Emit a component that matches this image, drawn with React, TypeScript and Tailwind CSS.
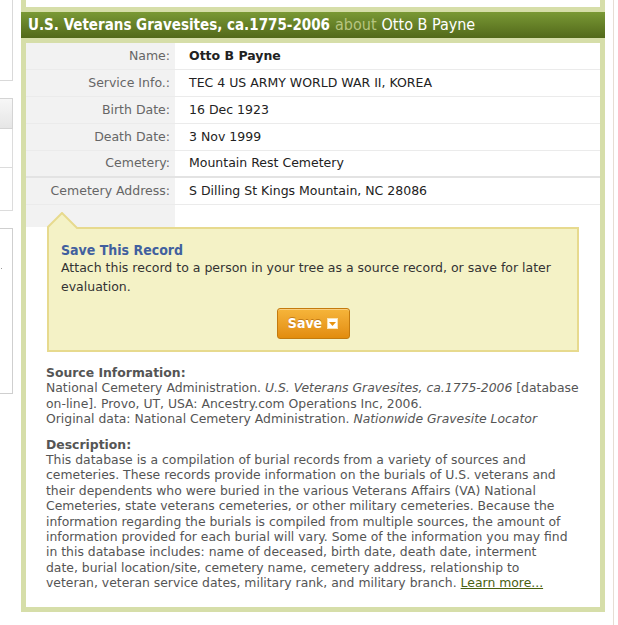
import React from 'react'

const rows = [
  { label: 'Name:', value: 'Otto B Payne', bold: true },
  { label: 'Service Info.:', value: 'TEC 4 US ARMY WORLD WAR II, KOREA' },
  { label: 'Birth Date:', value: '16 Dec 1923' },
  { label: 'Death Date:', value: '3 Nov 1999' },
  { label: 'Cemetery:', value: 'Mountain Rest Cemetery', thick: true },
  { label: 'Cemetery Address:', value: 'S Dilling St Kings Mountain, NC 28086' },
]

function Sidebar() {
  return (
    <div className="w-[13px] shrink-0 flex flex-col">
      <div className="h-[81px] border-r border-b border-[#d9d9d9] bg-white" />
      <div className="h-[17px]" />
      <div className="h-[31px] border-r border-y border-[#d4d4d4] bg-gradient-to-b from-[#f7f7f7] to-[#e6e6e6]" />
      <div className="h-[39px] border-r border-b border-[#dcdcdc] bg-white" />
      <div className="h-[43px] border-r border-b border-[#dcdcdc] bg-white" />
      <div className="h-[17px]" />
      <div className="h-[166px] border-r border-y border-[#cfcfcf] bg-white relative">
        <span className="absolute left-[1px] top-[39px] w-[1px] h-[1px] bg-[#999]" />
      </div>
    </div>
  )
}

function SaveButton() {
  return (
    <button className="h-[31px] w-[73px] rounded-[3px] border border-[#c47a0e] bg-gradient-to-b from-[#f6b53a] to-[#e28c0c] text-white font-bold text-[14px] font-['DejaVu_Sans_Condensed',sans-serif] flex items-center justify-center gap-[5px] shadow-[inset_0_1px_0_rgba(255,255,255,0.35)] [text-shadow:0_-1px_0_rgba(150,80,0,0.5)]">
      <span>Save</span>
      <span className="w-[11px] h-[11px] bg-white flex items-center justify-center border border-[#fbe3b0]">
        <svg width="7" height="4" viewBox="0 0 7 4">
          <path d="M0 0 L7 0 L3.5 4 Z" fill="#e8940f" />
        </svg>
      </span>
    </button>
  )
}

export default function App() {
  return (
    <div className="min-h-[625px] w-[618px] bg-white flex font-['DejaVu_Sans',sans-serif]">
      <Sidebar />

      <div className="ml-[8px] w-[584px] shrink-0">
        {/* bottom of the panel above */}
        <div className="h-[12px] border-x-[5px] border-b-[5px] border-[#d6dea9] bg-white" />

        {/* header bar */}
        <div className="h-[26px] bg-gradient-to-b from-[#7a9935] to-[#52691a] flex items-center px-[7px] whitespace-nowrap text-[15px] font-['DejaVu_Sans_Condensed',sans-serif]">
          <span className="text-white font-bold">U.S. Veterans Gravesites, ca.1775-2006</span>
          <span className="text-[#b7c580] ml-[5px] text-[16px]">about</span>
          <span className="text-white ml-[5px] text-[16px]">Otto B Payne</span>
        </div>

        <div className="border-[5px] border-[#d6dea9] bg-white">
          {/* fact table */}
          <div className="text-[12.5px]">
            {rows.map((r) => (
              <div
                key={r.label}
                className={`flex h-[27px] ${r.thick ? 'border-b-2 border-[#e3e3e3]' : 'border-b border-[#ebebeb]'}`}
              >
                <div className="w-[149px] shrink-0 bg-[#f2f2f2] text-[#666] text-right pr-[5px] flex items-center justify-end">
                  {r.label}
                </div>
                <div className={`pl-[14px] flex items-center text-[#222] ${r.bold ? 'font-bold' : ''}`}>
                  {r.value}
                </div>
              </div>
            ))}
            <div className="flex h-[22px]">
              <div className="w-[149px] bg-[#f2f2f2]" />
            </div>
          </div>

          {/* save box */}
          <div className="relative mx-[21px] border-2 border-[#e7da8e] bg-[#f4f2c6] px-[12px] pt-[13px] pb-[11px] text-[12.5px]">
            <svg
              className="absolute left-[-2px] top-[-17px]"
              width="34"
              height="17"
              viewBox="0 0 34 17"
            >
              <path d="M1 17 L1 15 L15 1 L31 17" fill="#f4f2c6" stroke="#e7da8e" strokeWidth="2" />
            </svg>
            <div className="text-[#41609e] font-bold text-[14px] leading-[16px] font-['DejaVu_Sans_Condensed',sans-serif]">
              Save This Record
            </div>
            <p className="text-[#333] leading-[19px]">
              Attach this record to a person in your tree as a source record, or save for later evaluation.
            </p>
            <div className="flex justify-center mt-[12px]">
              <SaveButton />
            </div>
          </div>

          {/* source and description */}
          <div className="px-[20px] pt-[13px] pb-[16px] text-[12.4px] leading-[15.4px] text-[#555]">
            <div className="font-bold">Source Information:</div>
            <p>
              National Cemetery Administration. <i>U.S. Veterans Gravesites, ca.1775-2006</i> [database
              on-line]. Provo, UT, USA: Ancestry.com Operations Inc, 2006.
            </p>
            <p>
              Original data: National Cemetery Administration. <i>Nationwide Gravesite Locator</i>
            </p>
            <div className="font-bold mt-[10px]">Description:</div>
            <p>
              This database is a compilation of burial records from a variety of sources and cemeteries.
              These records provide information on the burials of U.S. veterans and their dependents who
              were buried in the various Veterans Affairs (VA) National Cemeteries, state veterans
              cemeteries, or other military cemeteries. Because the information regarding the burials is
              compiled from multiple sources, the amount of information provided for each burial will vary.
              Some of the information you may find in this database includes: name of deceased, birth date,
              death date, interment
              <br />
              date, burial location/site, cemetery name, cemetery address, relationship to
              <br />
              veteran, veteran service dates, military rank, and military branch.{' '}
              <a href="#" className="text-[#4a6010] underline">Learn more...</a>
            </p>
          </div>
        </div>
      </div>

      <div className="ml-[8px] w-[1px] bg-[#e6ddd4] self-stretch" />
    </div>
  )
}
